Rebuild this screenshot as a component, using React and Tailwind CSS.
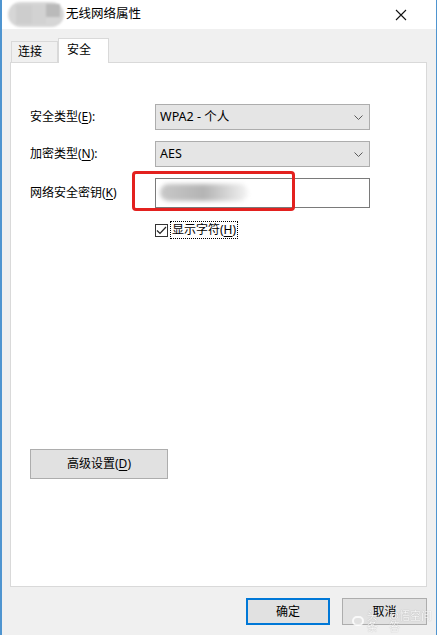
import React from "react";

const font = "font-['Noto_Sans','Noto_Sans_CJK_SC',sans-serif]";

function Key({ children }) {
  return <span className="underline underline-offset-2">{children}</span>;
}

function Chevron() {
  return (
    <svg width="9" height="5" viewBox="0 0 9 5" className="shrink-0">
      <path d="M0.5 0.5 L4.5 4.5 L8.5 0.5" fill="none" stroke="#5a5a5a" strokeWidth="1" />
    </svg>
  );
}

function Select({ value }) {
  return (
    <div className="flex h-[26px] w-[215px] items-center justify-between border border-[#adadad] bg-[#e5e5e5] pl-[4px] pr-[6px] text-[12.5px] leading-none text-black">
      <span>{value}</span>
      <Chevron />
    </div>
  );
}

function Label({ children }) {
  return <div className="w-[125px] text-[12px] leading-none text-black">{children}</div>;
}

function Button({ children, primary, className = "" }) {
  return (
    <div
      className={
        "flex items-center justify-center bg-[#e1e1e1] text-[12px] leading-none text-black " +
        (primary ? "border-2 border-[#0078d7] " : "border border-[#adadad] ") +
        className
      }
    >
      {children}
    </div>
  );
}

export default function App() {
  return (
    <div className={`relative flex h-[635px] w-[437px] flex-col overflow-hidden border-l-2 border-r border-[#4f95d0] bg-[#f0f0f0] ${font}`}>
      {/* title bar */}
      <div className="flex h-[29px] shrink-0 items-center bg-white">
        <div className="relative ml-[6px] h-[25px] w-[56px] rounded-full bg-[#d6d6d6] blur-[1px]">
          <div className="absolute left-[8px] top-[3px] h-[19px] w-[16px] bg-[#cdcdcd]" />
          <div className="absolute left-[24px] top-[3px] h-[19px] w-[14px] bg-[#d2d2d2]" />
          <div className="absolute left-[38px] top-[2px] h-[13px] w-[14px] bg-[#bababa]" />
        </div>
        <span className="ml-[2px] text-[12.5px] leading-none text-black">无线网络属性</span>
        <div className="flex-1" />
        <svg width="12" height="12" viewBox="0 0 12 12" className="mr-[29px]">
          <path d="M1 1 L11 11 M11 1 L1 11" stroke="#111" strokeWidth="1.1" />
        </svg>
      </div>

      {/* body */}
      <div className="flex flex-1 flex-col pl-[8px] pr-[9px]">
        {/* tabs */}
        <div className="mt-[9px] flex h-[24px] items-end pl-[1px]">
          <div className="flex h-[21px] w-[47px] items-center border border-b-0 border-[#d9d9d9] bg-[#f0f0f0] pl-[6px] text-[12px] leading-none text-black">
            连接
          </div>
          <div className="relative z-10 -mb-px flex h-[25px] w-[51px] items-center border border-b-0 border-[#d9d9d9] bg-white pl-[8px] pb-[3px] text-[12px] leading-none text-black">
            安全
          </div>
        </div>

        {/* panel */}
        <div className="relative flex h-[525px] flex-col border border-[#d9d9d9] bg-white pl-[19px]">
          <div className="mt-[41px] flex items-center">
            <Label>
              安全类型(<Key>E</Key>):
            </Label>
            <Select value="WPA2 - 个人" />
          </div>
          <div className="mt-[11px] flex items-center">
            <Label>
              加密类型(<Key>N</Key>):
            </Label>
            <Select value="AES" />
          </div>
          <div className="mt-[11px] flex items-center">
            <Label>
              网络安全密钥(<Key>K</Key>)
            </Label>
            <div className="relative h-[30px] w-[215px] border border-[#7a7a7a] bg-white">
              <div className="absolute left-[4px] top-[5px] h-[17px] w-[88px] rounded-full bg-gradient-to-r from-[#c8c8c8] via-[#b4b4b4] to-[#f4f4f4] blur-[2px]" />
            </div>
          </div>
          <div className="mt-[13px] flex items-center pl-[125px]">
            <div className="flex h-[13px] w-[13px] items-center justify-center border border-[#333] bg-white">
              <svg width="11" height="9" viewBox="0 0 11 9">
                <path d="M1 4.5 L4 7.5 L10 1" fill="none" stroke="#222" strokeWidth="1.2" />
              </svg>
            </div>
            <div className="ml-[2px] border border-dotted border-black px-[1px] py-[2px] text-[12px] leading-none text-black">
              显示字符(<Key>H</Key>)
            </div>
          </div>

          <Button className="mt-[210px] h-[30px] w-[138px]">
            高级设置(<Key>D</Key>)
          </Button>

          {/* annotation */}
          <div className="absolute left-[121px] top-[108px] h-[40px] w-[163px] rounded-[4px] border-[3px] border-[#e3211f]" />
        </div>

        {/* footer buttons */}
        <div className="mt-[11px] flex justify-end gap-[12px]">
          <Button primary className="h-[27px] w-[84px]">确定</Button>
          <Button className="h-[27px] w-[85px]">取消</Button>
        </div>
      </div>

      {/* watermark */}
      <div className="absolute left-[350px] top-[610px] flex items-center gap-[3px] text-[11px] leading-none text-white opacity-80 [text-shadow:0_0_1px_#888]">
        <span className="inline-block h-[10px] w-[13px] rounded-full border-2 border-white" />
        <span>头条</span>
        <span>@悟空问答</span>
      </div>
    </div>
  );
}
